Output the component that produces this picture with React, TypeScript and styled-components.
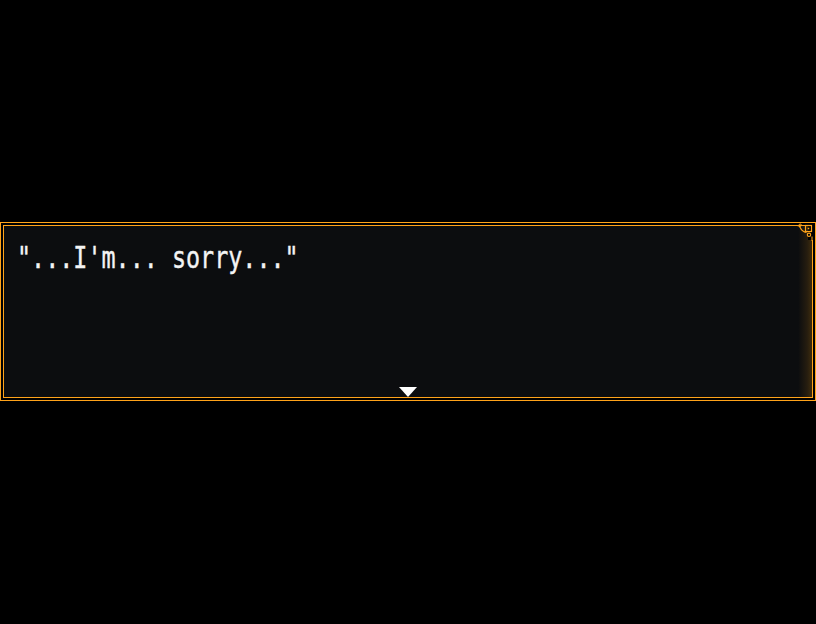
import React from "react";
import styled, { createGlobalStyle } from "styled-components";

const Global = createGlobalStyle`
  html, body { margin: 0; padding: 0; background: #000; }
  body { width: 816px; height: 624px; overflow: hidden; }
`;

const Stage = styled.div`
  width: 816px;
  height: 624px;
  background: #000;
  padding-top: 222px;
  box-sizing: border-box;
`;

const Frame = styled.div`
  position: relative;
  width: 816px;
  height: 179px;
  box-sizing: border-box;
  border: 1px solid #ffa31a;
  padding: 2px;
  background: #000;
`;

const Panel = styled.div`
  height: 100%;
  box-sizing: border-box;
  border: 1px solid #ffa31a;
  background: linear-gradient(
    to right,
    #0c0d0f 0%,
    #0c0d0f 98.3%,
    #261d0f 99.4%,
    #3e2c0e 100%
  );
  display: flex;
  flex-direction: column;
  justify-content: space-between;
  padding: 16px 0 0 13px;
`;

const Line = styled.div`
  font-family: "DejaVu Sans Mono", "Liberation Mono", monospace;
  font-size: 23.4px;
  line-height: 24px;
  color: #f4f4f4;
  white-space: pre;
  transform: scale(1, 1.3);
  transform-origin: 0 0;
  -webkit-text-stroke: 0.3px #f4f4f4;
`;

const Caret = styled.div`
  align-self: center;
  width: 0;
  height: 0;
  border-left: 9px solid transparent;
  border-right: 9px solid transparent;
  border-top: 10px solid #ffffff;
  margin-left: -13px;
`;

const Ornament = styled.svg`
  position: absolute;
  top: 0px;
  right: 0px;
  width: 18px;
  height: 18px;
`;

export default function App() {
  return (
    <>
      <Global />
      <Stage>
        <Frame>
          <Panel>
            <Line>"...I'm... sorry..."</Line>
            <Caret />
          </Panel>
          <Ornament viewBox="0 0 18 18">
            <rect x="11" y="1" width="7" height="16" fill="#000" />
            <path d="M0 2.5 Q2.5 2.5 3.5 5 Q5 8.5 9.5 9.5" fill="none" stroke="#ffa31a" strokeWidth="1.2" />
            <circle cx="3.2" cy="2.2" r="1.2" fill="none" stroke="#ffa31a" strokeWidth="1" />
            <rect x="8.5" y="2.5" width="6" height="6" fill="none" stroke="#ffa31a" strokeWidth="1.2" />
            <rect x="10.7" y="4.7" width="1.6" height="1.6" fill="#ffa31a" />
            <circle cx="12" cy="11.8" r="1.7" fill="none" stroke="#ffa31a" strokeWidth="1.1" />
            <rect x="14.5" y="13.5" width="1" height="4.5" fill="#ffa31a" />
          </Ornament>
        </Frame>
      </Stage>
    </>
  );
}
